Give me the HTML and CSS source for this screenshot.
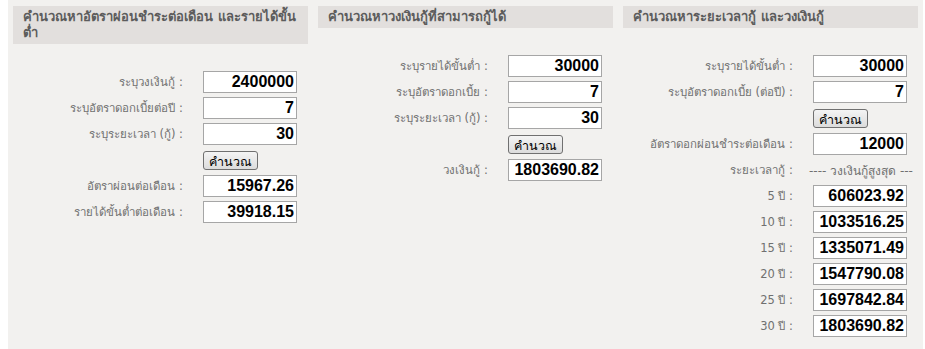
FILE: index.html
```html
<!DOCTYPE html>
<html lang="th">
<head>
    <meta charset="UTF-8">
    <title>คำนวณเงินกู้</title>
    <link rel="stylesheet" href="styles.css">
</head>
<body>

    <div class="page">

        <div class="col">
            <div class="head">คำนวณหาอัตราผ่อนชำระต่อเดือน และรายได้ขั้นต่ำ</div>
            <div class="form">
                <label>ระบุวงเงินกู้ :</label><input class="num" value="2400000">
                <label>ระบุอัตราดอกเบี้ยต่อปี :</label><input class="num" value="7">
                <label>ระบุระยะเวลา (กู้) :</label><input class="num" value="30">
                <span></span><div><button class="calc">คำนวณ</button></div>
                <label>อัตราผ่อนต่อเดือน :</label><input class="num" value="15967.26">
                <label>รายได้ขั้นต่ำต่อเดือน :</label><input class="num" value="39918.15">
            </div>
        </div>

        <div class="col">
            <div class="head">คำนวณหาวงเงินกู้ที่สามารถกู้ได้</div>
            <div class="form">
                <label>ระบุรายได้ขั้นต่ำ :</label><input class="num" value="30000">
                <label>ระบุอัตราดอกเบี้ย :</label><input class="num" value="7">
                <label>ระบุระยะเวลา (กู้) :</label><input class="num" value="30">
                <span></span><div><button class="calc">คำนวณ</button></div>
                <label>วงเงินกู้ :</label><input class="num" value="1803690.82">
            </div>
        </div>

        <div class="col">
            <div class="head">คำนวณหาระยะเวลากู้ และวงเงินกู้</div>
            <div class="form">
                <label>ระบุรายได้ขั้นต่ำ :</label><input class="num" value="30000">
                <label>ระบุอัตราดอกเบี้ย (ต่อปี) :</label><input class="num" value="7">
                <span></span><div><button class="calc">คำนวณ</button></div>
                <label>อัตราดอกผ่อนชำระต่อเดือน :</label><input class="num" value="12000">
                <label>ระยะเวลากู้ :</label><span class="note">---- วงเงินกู้สูงสุด ---</span>
                <label>5 ปี :</label><input class="num" value="606023.92">
                <label>10 ปี :</label><input class="num" value="1033516.25">
                <label>15 ปี :</label><input class="num" value="1335071.49">
                <label>20 ปี :</label><input class="num" value="1547790.08">
                <label>25 ปี :</label><input class="num" value="1697842.84">
                <label>30 ปี :</label><input class="num" value="1803690.82">
            </div>
        </div>

    </div>

</body>
</html>
```

FILE: styles.css
```css
* { box-sizing: border-box; }
body { margin: 0; background: #ffffff; font-family: Tahoma, "DejaVu Sans", sans-serif; font-size: 13px; }
.page { display: flex; margin-left: 8px; width: 915px; min-height: 349px; background: #f2f1ef; }
.col { width: 305px; padding: 6px 5px 5px 5px; }
.head { background: #e2dfdd; color: #5c5c5c; font-weight: bold; font-size: 13px; line-height: 16px; padding: 3px 10px; }
.form { display: grid; grid-template-columns: 170px 94px; column-gap: 20px; row-gap: 4px; margin-top: 27px; grid-auto-rows: 22px; align-items: center; }
.form label { text-align: right; color: #707070; font-size: 11.5px; white-space: nowrap; }
.num { width: 94px; height: 22px; border: 1px solid #a6a6a6; background: #fff; font: bold 16px "Liberation Sans", Arial, sans-serif; color: #000; text-align: right; padding: 0 2px; margin: 0; }
.calc { height: 19px; padding: 0 5px; font-family: Tahoma, "DejaVu Sans", sans-serif; font-size: 12.5px; color: #000; border: 1px solid #707070; border-radius: 3px; background: linear-gradient(#f4f4f4, #dcdcdc); }
.note { color: #707070; font-size: 12px; white-space: nowrap; margin-left: -4px; }
```
